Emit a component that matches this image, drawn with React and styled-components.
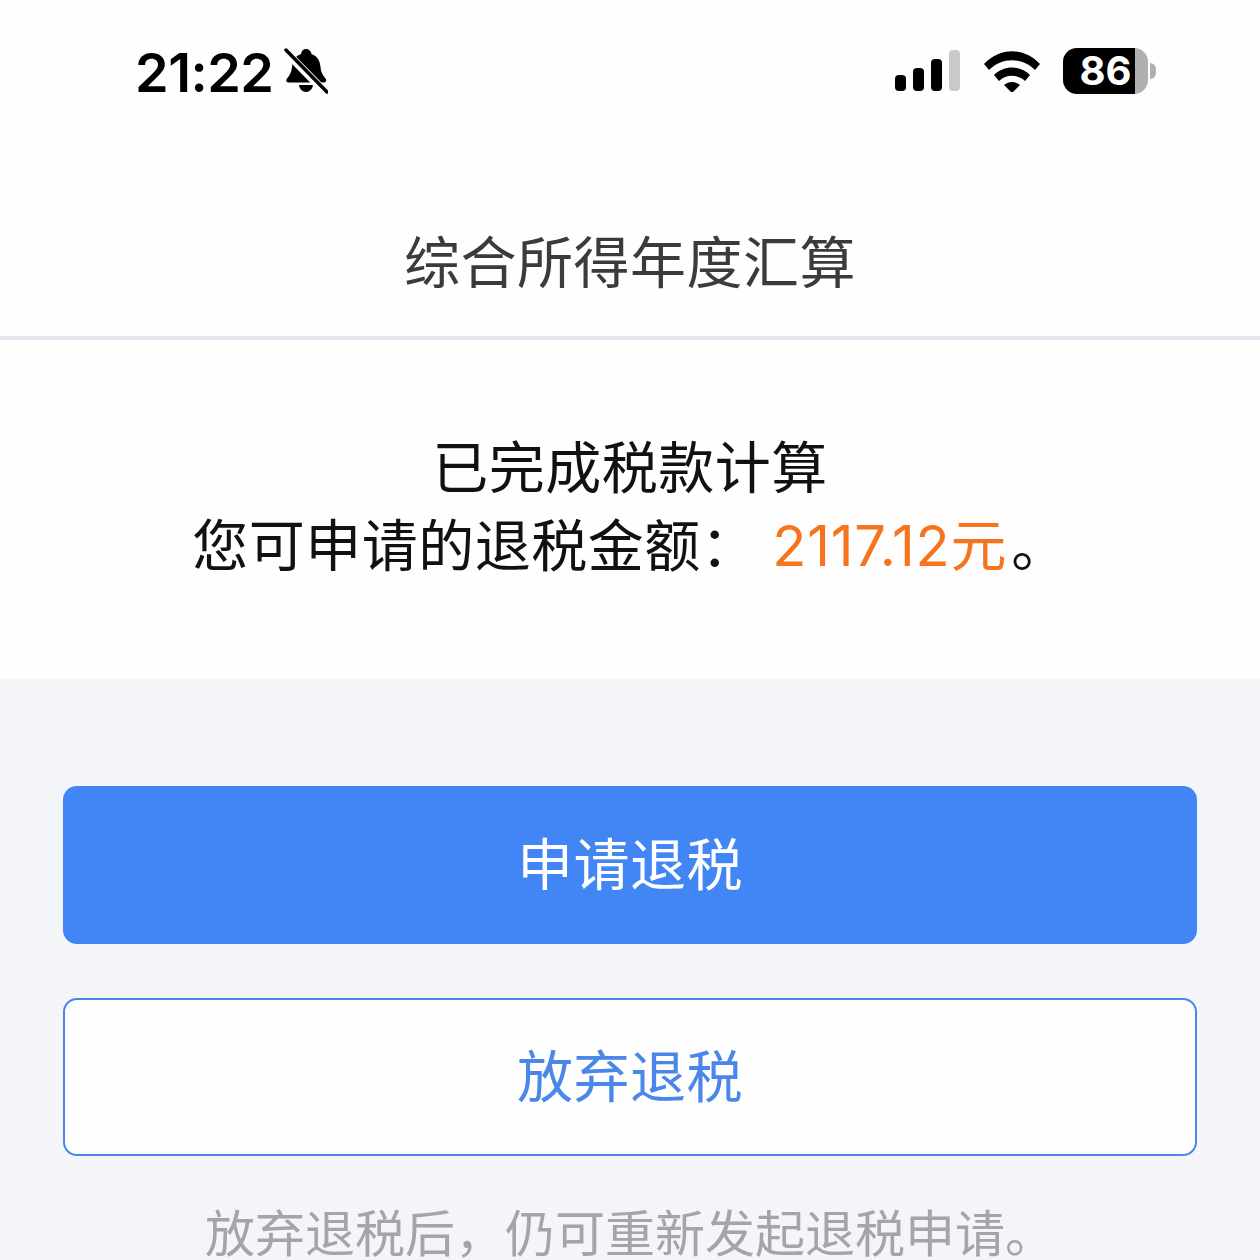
import React from "react";
import styled, { createGlobalStyle } from "styled-components";

const CJK = `"Noto Sans CJK SC", "Noto Sans", sans-serif`;

const GlobalStyle = createGlobalStyle`
  html, body {
    margin: 0;
    padding: 0;
    background: #f3f5f9;
  }
  * {
    box-sizing: border-box;
  }
`;

const Page = styled.div`
  width: 1260px;
  height: 1260px;
  overflow: hidden;
  background: #f3f5f9;
  font-family: ${CJK};
`;

const Header = styled.div`
  background: #fefefe;
  border-bottom: 4px solid #e6e6ee;
  height: 340px;
  display: flex;
  flex-direction: column;
`;

const StatusBar = styled.div`
  height: 142px;
  display: flex;
  justify-content: space-between;
  align-items: center;
  padding: 0 104px 0 135px;
`;

const TimeGroup = styled.div`
  display: flex;
  align-items: center;
  gap: 10px;
`;

const Time = styled.span`
  font-family: Inter, "Liberation Sans", sans-serif;
  font-weight: 600;
  font-size: 54px;
  line-height: 60px;
  letter-spacing: -0.5px;
  color: #000;
  padding-top: 3px;
`;

const StatusIcons = styled.div`
  display: flex;
  align-items: center;
  gap: 22px;
`;

const Battery = styled.div`
  width: 93px;
  height: 46px;
  display: flex;
  align-items: center;
`;

const BatteryBody = styled.div`
  width: 85px;
  height: 46px;
  border-radius: 14px;
  display: flex;
  justify-content: center;
  align-items: center;
  background: linear-gradient(to right, #000 85%, #b0b0b0 85%);
  color: #fff;
  font-family: Inter, "Liberation Sans", sans-serif;
  font-weight: 700;
  font-size: 40px;
  line-height: 46px;
`;

const BatteryCap = styled.div`
  width: 6px;
  height: 16px;
  margin-left: 2px;
  border-radius: 0 8px 8px 0;
  background: #b0b0b0;
`;

const Title = styled.h1`
  margin: 0;
  flex: 1;
  display: flex;
  align-items: center;
  justify-content: center;
  padding-top: 38px;
  font-weight: 400;
  font-size: 56px;
  color: #3b3b3b;
  letter-spacing: 0.5px;
`;

const Result = styled.div`
  height: 339px;
  background: #fefefe;
  padding-top: 85px;
  text-align: center;
  font-size: 56px;
  line-height: 78px;
  letter-spacing: 0.5px;
  color: #111;
`;

const ResultLine = styled.div`
  white-space: pre;
`;

const Amount = styled.span`
  font-family: Inter, ${CJK};
  color: #f7741f;
  letter-spacing: 0.8px;
  margin-left: 15px;
  margin-right: 4px;
`;

const Actions = styled.div`
  padding: 107px 63px 0;
  display: flex;
  flex-direction: column;
  gap: 54px;
`;

const ActionButton = styled.button`
  height: 158px;
  width: 100%;
  padding: 0 0 10px;
  border-radius: 14px;
  font-family: ${CJK};
  font-size: 56px;
  font-weight: 400;
  letter-spacing: 0.5px;
  border: ${(p) => (p.$primary ? "none" : "2px solid #4a87e8")};
  background: ${(p) => (p.$primary ? "#4285f4" : "#fefefe")};
  color: ${(p) => (p.$primary ? "#fff" : "#4a87e8")};
`;

const Note = styled.div`
  margin-top: 48px;
  text-align: center;
  font-size: 50px;
  line-height: 52px;
  color: #a3a5ab;
  white-space: pre;
`;

const BellOff = () => (
  <svg width="44" height="48" viewBox="0 0 44 48">
    <path
      d="M22 2c3 0 5 2 5.500 5 6 2 8.500 7 9 13 .4 5 2 8 5 11.500 1.500 2 .5 4-2 4H5c-2.500 0-3.500-2-2-4 3-3.500 4.500-6.500 5-11.500.5-6 3-11 9-13C17.500 4 19 2 22 2z"
      fill="#000"
    />
    <path d="M15 38h14c-.5 4-3.500 7-7 7s-6.500-3-7-7z" fill="#000" />
    <path d="M1 4l41 42" stroke="#fefefe" strokeWidth="8" />
    <path d="M2 3l41 42" stroke="#000" strokeWidth="3.500" strokeLinecap="round" />
  </svg>
);

const Signal = () => (
  <svg width="66" height="42" viewBox="0 0 66 42">
    <rect x="0" y="25" width="11" height="16" rx="4" fill="#000" />
    <rect x="18" y="18" width="11" height="23" rx="4" fill="#000" />
    <rect x="36" y="9" width="11" height="32" rx="4" fill="#000" />
    <rect x="54" y="0" width="11" height="41" rx="4" fill="#c9c9c9" />
  </svg>
);

const Wifi = () => (
  <svg width="58" height="42" viewBox="0 0 58 42">
    <path d="M1 14C17-3 41-3 57 14l-5 6C39 7 19 7 6 20z" fill="#000" />
    <path d="M11 25c10-10 26-10 36 0l-5 6c-7-7-19-7-26 0z" fill="#000" />
    <path d="M21 35c5-4 11-4 16 0l-8 8z" fill="#000" />
  </svg>
);

export default function App() {
  return (
    <Page>
      <GlobalStyle />
      <Header>
        <StatusBar>
          <TimeGroup>
            <Time>21:22</Time>
            <BellOff />
          </TimeGroup>
          <StatusIcons>
            <Signal />
            <Wifi />
            <Battery>
              <BatteryBody>86</BatteryBody>
              <BatteryCap />
            </Battery>
          </StatusIcons>
        </StatusBar>
        <Title>综合所得年度汇算</Title>
      </Header>
      <Result>
        <ResultLine>已完成税款计算</ResultLine>
        <ResultLine>
          您可申请的退税金额：<Amount>2117.12元</Amount>。
        </ResultLine>
      </Result>
      <Actions>
        <ActionButton $primary>申请退税</ActionButton>
        <ActionButton>放弃退税</ActionButton>
      </Actions>
      <Note>放弃退税后，仍可重新发起退税申请。</Note>
    </Page>
  );
}
